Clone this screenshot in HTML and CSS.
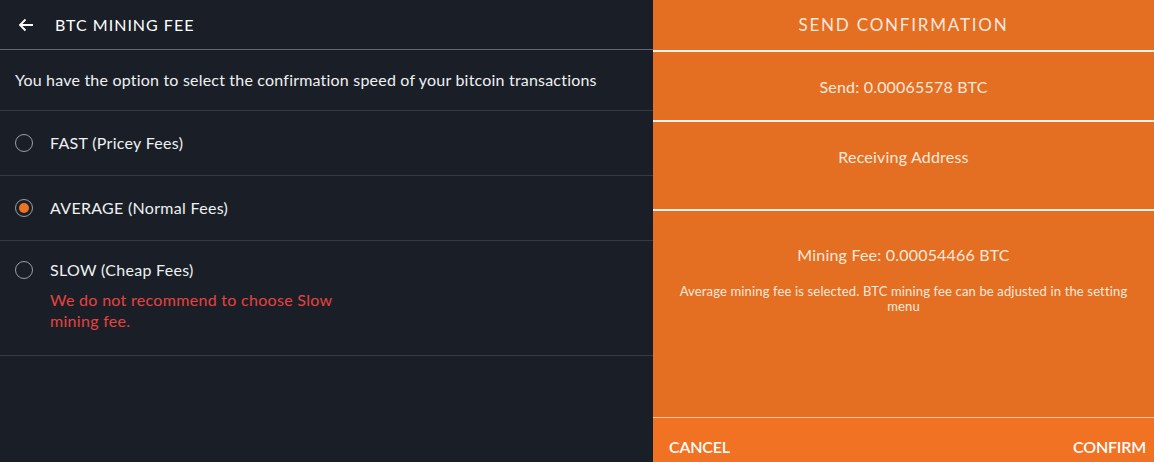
FILE: index.html
```html
<!DOCTYPE html>
<html lang="en">
<head>
  <meta charset="UTF-8" />
  <meta name="viewport" content="width=device-width, initial-scale=1.0"/>
  <title>BTC Mining Fee</title>
  <link rel="stylesheet" href="styles.css">
</head>
<body>
  <div class="page">
    <div class="settings">
      <div class="topbar">
        <svg class="back" width="16" height="14" viewBox="0 0 16 14">
          <path d="M15 7H2M7.5 1.5L2 7l5.5 5.5" fill="none" stroke="#fff" stroke-width="1.8"/>
        </svg>
        <span class="title">BTC MINING FEE</span>
      </div>

      <div class="intro">You have the option to select the confirmation speed of your bitcoin transactions</div>

      <div class="option">
        <span class="radio"></span>
        <span class="label">FAST (Pricey Fees)</span>
      </div>
      <div class="option">
        <span class="radio checked"></span>
        <span class="label">AVERAGE (Normal Fees)</span>
      </div>
      <div class="option slow">
        <span class="radio"></span>
        <div>
          <span class="label">SLOW (Cheap Fees)</span>
          <p class="warning">We do not recommend to choose Slow mining fee.</p>
        </div>
      </div>
    </div>

    <div class="confirm">
      <div class="confirm-head">SEND CONFIRMATION</div>
      <div class="send">Send: 0.00065578 BTC</div>
      <div class="address">Receiving Address</div>
      <div class="fee">
        <div class="fee-amount">Mining Fee: 0.00054466 BTC</div>
        <div class="fee-note">Average mining fee is selected. BTC mining fee can be adjusted in the setting menu</div>
      </div>
      <div class="actions">
        <button>CANCEL</button>
        <button>CONFIRM</button>
      </div>
    </div>
  </div>
</body>
</html>
```

FILE: styles.css
```css
body {
  margin: 0;
  background: #1a1f27;
  font-family: Lato, "Open Sans", sans-serif;
  color: #eef0f2;
}

.page {
  display: flex;
  height: 462px;
  overflow: hidden;
}

.settings {
  width: 653px;
  background: #1a1f27;
}

.topbar {
  display: flex;
  align-items: center;
  height: 49px;
  padding-left: 18px;
  border-bottom: 1px solid #63676d;
}

.back {
  margin-right: 21px;
}

.title {
  font-size: 16px;
  letter-spacing: 1px;
  color: #fff;
}

.intro {
  height: 60px;
  line-height: 60px;
  padding-left: 15px;
  font-size: 16px;
  letter-spacing: 0.2px;
  border-bottom: 1px solid #363b43;
}

.option {
  display: flex;
  align-items: center;
  height: 64px;
  padding-left: 15px;
  border-bottom: 1px solid #363b43;
  font-size: 16px;
  letter-spacing: 0.3px;
}

.option.slow {
  align-items: flex-start;
  height: 96px;
  padding-top: 18px;
}

.radio {
  width: 16px;
  height: 16px;
  border: 1.5px solid #9a9ea4;
  border-radius: 50%;
  margin-right: 17px;
  position: relative;
  flex-shrink: 0;
}

.option.slow .radio {
  margin-top: 2px;
}

.radio.checked::after {
  content: "";
  position: absolute;
  left: 3px;
  top: 3px;
  width: 10px;
  height: 10px;
  border-radius: 50%;
  background: #ef7223;
}

.label {
  line-height: 22px;
}

.warning {
  margin: 8px 0 0;
  width: 310px;
  color: #e8423f;
  font-size: 16px;
  line-height: 21px;
}

.confirm {
  flex: 1;
  display: flex;
  flex-direction: column;
  background: #e46f22;
  color: #fbe8dc;
  text-align: center;
}

.confirm-head {
  height: 50px;
  line-height: 50px;
  font-size: 17px;
  letter-spacing: 1.8px;
  border-bottom: 2px solid #fff3ea;
}

.send {
  height: 68px;
  line-height: 70px;
  font-size: 16px;
  letter-spacing: 0.2px;
  border-bottom: 2px solid #fff3ea;
}

.address {
  height: 87px;
  line-height: 70px;
  font-size: 16px;
  letter-spacing: 0.2px;
  border-bottom: 2px solid #fff3ea;
}

.fee {
  height: 206px;
  border-bottom: 1px solid #f5c7a4;
}

.fee-amount {
  margin-top: 34px;
  font-size: 16px;
  letter-spacing: 0.2px;
}

.fee-note {
  margin: 20px 22px 0;
  font-size: 13px;
  letter-spacing: 0.15px;
  line-height: 15px;
}

.actions {
  flex: 1;
  display: flex;
  justify-content: space-between;
  align-items: flex-end;
  padding: 0 8px 6px 16px;
  background: #f07222;
}

.actions button {
  background: none;
  border: none;
  padding: 0;
  color: #fff;
  font-family: Lato, "Open Sans", sans-serif;
  font-size: 16px;
  font-weight: 600;
  letter-spacing: -0.2px;
  cursor: pointer;
}
```
